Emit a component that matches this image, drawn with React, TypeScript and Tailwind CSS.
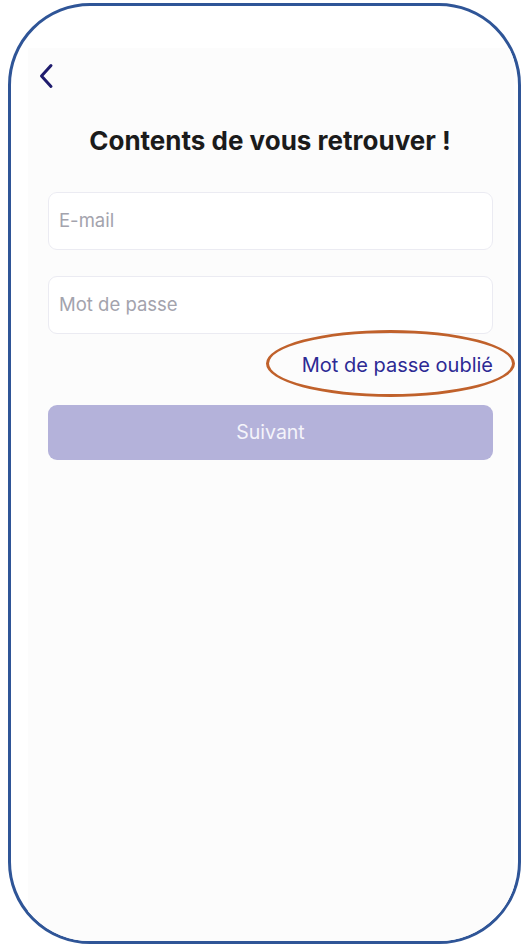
import React from "react";

const font = { fontFamily: "Inter, 'Liberation Sans', sans-serif" };

function Field({ placeholder, className }: { placeholder: string; className?: string }) {
    return (
        <div className={"h-[58px] rounded-[9px] border border-[#ebebf2] bg-white flex items-center px-[10px] " + (className ?? "")}>
            <span className="text-[18.5px] text-[#a3a3ad]">{placeholder}</span>
        </div>
    );
}

export default function App() {
    return (
        <div className="relative w-[528px] h-[950px] bg-white pt-[3px] pl-[8px]" style={font}>
            <div className="w-[513px] h-[941px] border-[3px] border-[#2f5597] rounded-[82px] overflow-hidden flex flex-col">
                <div className="mt-[42px] ml-[17px] mr-[4px] flex-1 bg-[#fcfcfc] flex flex-col">
                    <div className="pl-[10px] pt-[15px]">
                        <svg width="16" height="26" viewBox="0 0 16 26" fill="none">
                            <path d="M13 2.5 L3.5 13 L13 23.5" stroke="#1f1c6e" strokeWidth="3" strokeLinecap="round" strokeLinejoin="round" />
                        </svg>
                    </div>
                    <h1 className="mt-[37px] text-center text-[26px] leading-[30px] font-bold text-[#1b1b1b] pr-[2px]">
                        Contents de vous retrouver !
                    </h1>
                    <div className="flex flex-col px-[20px] pr-[21px]">
                        <Field placeholder="E-mail" className="mt-[36px]" />
                        <Field placeholder="Mot de passe" className="mt-[26px]" />
                        <div className="mt-[20px] flex justify-end">
                            <span className="text-[20px] leading-[23px] text-[#2d2a94]">Mot de passe oublié</span>
                        </div>
                        <button className="mt-[28px] h-[55px] rounded-[9px] bg-[#b4b2da] text-[19.5px] text-[#f4f4fa]">
                            Suivant
                        </button>
                    </div>
                </div>
            </div>
            {/* annotation ring around the forgotten password link */}
            <div className="absolute left-[266px] top-[330px] w-[249px] h-[67px] rounded-[50%] border-[3px] border-[#c0612b]" />
        </div>
    );
}
